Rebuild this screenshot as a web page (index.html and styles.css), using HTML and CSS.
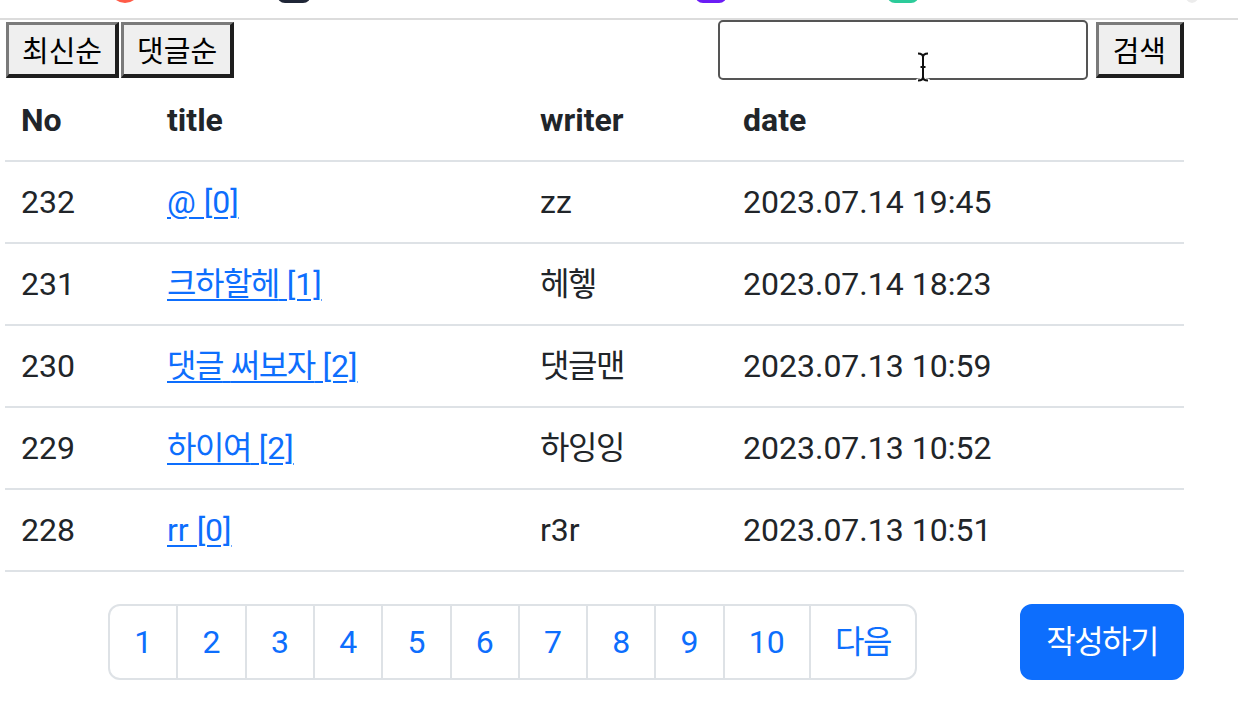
FILE: index.html
```html
<!DOCTYPE html>
<html lang="ko">
<head>
<meta charset="utf-8">
<title>게시판</title>
<link rel="stylesheet" href="styles.css">
</head>
<body>
<header class="topbar">
  <span class="logo logo-red"></span>
  <span class="logo logo-dark"></span>
  <span class="logo logo-purple"></span>
  <span class="logo logo-green"></span>
  <span class="logo logo-light"></span>
</header>
<main class="board">
  <div class="toolbar">
    <div class="sort-group">
      <button class="sys-btn">최신순</button>
      <button class="sys-btn">댓글순</button>
    </div>
    <form class="search-group">
      <input class="search-input" type="text">
      <button class="sys-btn search-btn" type="button">검색</button>
      <svg class="ibeam" width="14" height="30" viewBox="0 0 14 30">
        <path d="M2 1.5 Q7 1.5 7 5 Q7 1.5 12 1.5 M7 5 V25 M4.5 15 H9.5 M2 28.5 Q7 28.5 7 25 Q7 28.5 12 28.5" fill="none" stroke="#fff" stroke-width="4" stroke-linecap="round"/>
        <path d="M2 1.5 Q7 1.5 7 5 Q7 1.5 12 1.5 M7 5 V25 M4.5 15 H9.5 M2 28.5 Q7 28.5 7 25 Q7 28.5 12 28.5" fill="none" stroke="#111" stroke-width="2"/>
      </svg>
    </form>
  </div>

  <table class="list">
    <thead>
      <tr>
        <th class="c-no">No</th>
        <th class="c-title">title</th>
        <th class="c-writer">writer</th>
        <th class="c-date">date</th>
      </tr>
    </thead>
    <tbody>
      <tr>
        <td>232</td>
        <td><a href="#">@ [0]</a></td>
        <td>zz</td>
        <td>2023.07.14 19:45</td>
      </tr>
      <tr>
        <td>231</td>
        <td><a href="#"><span class="ko">크하할헤</span> [1]</a></td>
        <td><span class="ko">헤헿</span></td>
        <td>2023.07.14 18:23</td>
      </tr>
      <tr>
        <td>230</td>
        <td><a href="#"><span class="ko">댓글</span> <span class="ko">써보자</span> [2]</a></td>
        <td><span class="ko">댓글맨</span></td>
        <td>2023.07.13 10:59</td>
      </tr>
      <tr>
        <td>229</td>
        <td><a href="#"><span class="ko">하이여</span> [2]</a></td>
        <td><span class="ko">하잉잉</span></td>
        <td>2023.07.13 10:52</td>
      </tr>
      <tr>
        <td>228</td>
        <td><a href="#">rr [0]</a></td>
        <td>r3r</td>
        <td>2023.07.13 10:51</td>
      </tr>
    </tbody>
  </table>

  <div class="bottom-row">
    <nav class="pager-wrap">
      <ul class="pagination">
        <li><a class="page-link" href="#">1</a></li>
        <li><a class="page-link" href="#">2</a></li>
        <li><a class="page-link" href="#">3</a></li>
        <li><a class="page-link" href="#">4</a></li>
        <li><a class="page-link" href="#">5</a></li>
        <li><a class="page-link" href="#">6</a></li>
        <li><a class="page-link" href="#">7</a></li>
        <li><a class="page-link" href="#">8</a></li>
        <li><a class="page-link" href="#">9</a></li>
        <li><a class="page-link" href="#">10</a></li>
        <li><a class="page-link" href="#"><span class="ko">다음</span></a></li>
      </ul>
    </nav>
    <a class="write-btn" href="#"><span class="ko">작성하기</span></a>
  </div>
</main>
</body>
</html>
```

FILE: styles.css
```css
* { box-sizing: border-box; }

body {
  margin: 0;
  background: #fff;
  color: #212529;
  font-family: Roboto, "Noto Sans CJK KR", sans-serif;
}

.ko { letter-spacing: -1.5px; }

/* top strip with clipped logos */
.topbar {
  height: 20px;
  border-bottom: 2px solid #dcdcdc;
  display: flex;
  align-items: flex-start;
  overflow: hidden;
}
.logo {
  display: block;
  height: 30px;
  margin-top: -27px;
  flex: none;
}
.logo-red { margin-left: 110px; width: 30px; border-radius: 50%; background: #ff5b47; }
.logo-dark { margin-left: 137px; width: 34px; border-radius: 8px; background: #1f2637; }
.logo-purple { margin-left: 384px; width: 32px; border-radius: 8px; background: #6b1cf5; }
.logo-green { margin-left: 160px; width: 32px; border-radius: 8px; background: #2ccb9a; }
.logo-light { margin-left: 264px; width: 18px; border-radius: 50%; background: #ececec; }

.board {
  margin: 0 54px 0 5px;
}

/* toolbar */
.toolbar {
  height: 60px;
  display: flex;
  align-items: center;
  justify-content: space-between;
}
.sort-group {
  display: flex;
  gap: 2px;
  padding-left: 1px;
}
.sys-btn {
  height: 56px;
  padding: 0 13px;
  font-family: "Noto Sans CJK KR", sans-serif;
  font-size: 29px;
  line-height: 1;
  color: #000;
  background: #efefef;
  border-style: solid;
  border-width: 3px 4px 4px 3px;
  border-color: #7a7a7a #1e1e1e #1e1e1e #7a7a7a;
  border-radius: 0;
  display: flex;
  align-items: center;
}
.search-btn { padding: 0 14px; }
.search-group {
  position: relative;
  display: flex;
  align-items: center;
  gap: 8px;
  margin: 0;
}
.search-input {
  width: 370px;
  height: 60px;
  border: 2px solid #555;
  border-radius: 5px;
  background: #fff;
  font-size: 26px;
  padding: 0 8px;
}
.ibeam {
  position: absolute;
  left: 198px;
  top: 32px;
}

/* table */
.list {
  width: 100%;
  border-collapse: collapse;
  table-layout: fixed;
}
.list th,
.list td {
  padding: 16px;
  font-size: 32px;
  line-height: 48px;
  text-align: left;
  border-bottom: 2px solid #dee2e6;
  white-space: nowrap;
}
.list th { font-weight: 700; }
.c-no { width: 146px; }
.c-title { width: 373px; }
.c-writer { width: 203px; }
.list a {
  color: #0d6efd;
  text-decoration: underline;
  text-decoration-thickness: 2px;
  text-underline-offset: 4px;
}

/* bottom */
.bottom-row {
  display: flex;
  align-items: center;
  margin-top: 32px;
}
.pager-wrap {
  flex: 1;
  display: flex;
  justify-content: center;
}
.pagination {
  list-style: none;
  margin: 0;
  padding: 0;
  display: flex;
}
.pagination li + li { margin-left: -2px; }
.page-link {
  display: block;
  padding: 12px 24.15px;
  font-size: 32px;
  line-height: 48px;
  color: #0d6efd;
  text-decoration: none;
  background: #fff;
  border: 2px solid #dee2e6;
}
.pagination li:first-child .page-link { border-radius: 12px 0 0 12px; }
.pagination li:last-child .page-link { border-radius: 0 12px 12px 0; }
.write-btn {
  display: block;
  padding: 12px 24px;
  font-size: 32px;
  line-height: 48px;
  color: #fff;
  background: #0d6efd;
  border: 2px solid #0d6efd;
  border-radius: 12px;
  text-decoration: none;
}
```
